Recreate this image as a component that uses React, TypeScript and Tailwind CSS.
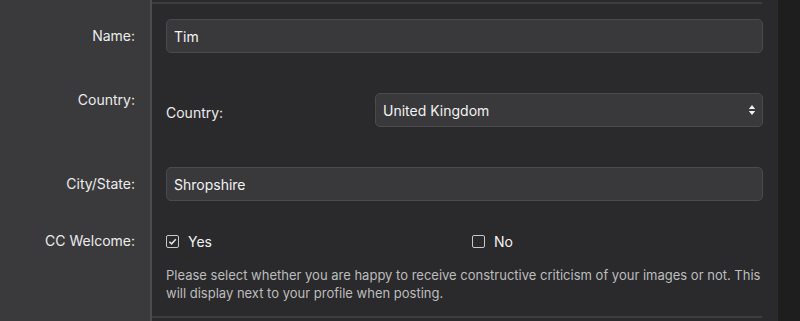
import React from 'react';

const font = { fontFamily: 'Inter, "Noto Sans", sans-serif' };

function Label({ text, pt }: { text: string; pt: string }) {
    return (
        <div className={`w-[152px] shrink-0 bg-[#3a3a3c] border-r-2 border-[#4c4c4e] text-right pr-[15px] text-[14px] leading-[20px] text-[#ececec] ${pt}`}>
            {text}
        </div>
    );
}

function Box({ checked }: { checked?: boolean }) {
    return (
        <span className="w-[13px] h-[13px] rounded-[2px] border-[1.5px] border-[#c8c8c8] flex items-center justify-center">
            {checked && (
                <svg width="9" height="9" viewBox="0 0 10 10" fill="none">
                    <path d="M1.5 5.2 L4 7.6 L8.6 2.4" stroke="#e8e8e8" strokeWidth="1.6" />
                </svg>
            )}
        </span>
    );
}

export default function App() {
    return (
        <div className="flex w-[800px] h-[321px] bg-[#2a2a2c] overflow-hidden" style={font}>
            <div className="flex flex-col w-[778px]">
                <div className="flex h-[4px]">
                    <div className="w-[152px] bg-[#3a3a3c] border-r-2 border-[#4c4c4e]" />
                    <div className="flex-1 mt-[2px] mr-[16px] border-t-2 border-[#3c3c3e]" />
                </div>

                {/* name */}
                <div className="flex h-[71px]">
                    <Label text="Name:" pt="pt-[22px]" />
                    <div className="flex-1 pl-[14px] pr-[15px] pt-[15px]">
                        <div className="h-[34px] rounded-[5px] bg-[#39393b] border border-[#4b4b4d] px-[7px] flex items-center text-[14px] text-[#f2f2f2]">
                            Tim
                        </div>
                    </div>
                </div>

                {/* country */}
                <div className="flex h-[71px]">
                    <Label text="Country:" pt="pt-[15px]" />
                    <div className="flex-1 pl-[14px] pr-[15px] pt-[18px]">
                        <div className="flex items-center">
                            <div className="w-[209px] pt-[4px] text-[14px] text-[#ececec]">Country:</div>
                            <div className="flex-1 h-[34px] rounded-[5px] bg-[#39393b] border border-[#4b4b4d] pl-[7px] pr-[6px] flex items-center justify-between text-[14px] text-[#f2f2f2]">
                                <span>United Kingdom</span>
                                <svg width="8" height="12" viewBox="0 0 8 12">
                                    <path d="M4 1 L7.2 5 L0.8 5 Z M4 11 L7.2 7 L0.8 7 Z" fill="#f0f0f0" />
                                </svg>
                            </div>
                        </div>
                    </div>
                </div>

                {/* city */}
                <div className="flex h-[74px]">
                    <Label text="City/State:" pt="pt-[28px]" />
                    <div className="flex-1 pl-[14px] pr-[15px] pt-[21px]">
                        <div className="h-[34px] rounded-[5px] bg-[#39393b] border border-[#4b4b4d] px-[7px] flex items-center text-[14px] text-[#f2f2f2]">
                            Shropshire
                        </div>
                    </div>
                </div>

                {/* cc welcome */}
                <div className="flex h-[96px]">
                    <Label text="CC Welcome:" pt="pt-[11px]" />
                    <div className="flex-1 pl-[14px] pt-[11px]">
                        <div className="flex h-[20px] items-center text-[14px] text-[#f2f2f2]">
                            <div className="w-[306px] flex items-center gap-[9px]">
                                <Box checked />
                                <span>Yes</span>
                            </div>
                            <div className="flex items-center gap-[9px]">
                                <Box />
                                <span>No</span>
                            </div>
                        </div>
                        <p className="mt-[15px] pr-[16px] text-[13px] leading-[18px] text-[#bdbdbd]">
                            Please select whether you are happy to receive constructive criticism of your images or not. This will display next to your profile when posting.
                        </p>
                    </div>
                </div>

                <div className="flex flex-1">
                    <div className="w-[152px] bg-[#3a3a3c] border-r-2 border-[#4c4c4e]" />
                    <div className="flex-1 mr-[16px] border-t-2 border-[#3c3c3e]" />
                </div>
            </div>
            <div className="flex-1 bg-[#1e1e1f]" />
        </div>
    );
}
